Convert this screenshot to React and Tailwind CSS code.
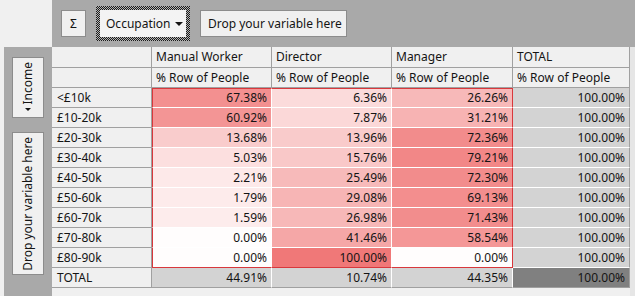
import React from 'react';

const rows = [
  ['<£10k', 67.38, 6.36, 26.26],
  ['£10-20k', 60.92, 7.87, 31.21],
  ['£20-30k', 13.68, 13.96, 72.36],
  ['£30-40k', 5.03, 15.76, 79.21],
  ['£40-50k', 2.21, 25.49, 72.3],
  ['£50-60k', 1.79, 29.08, 69.13],
  ['£60-70k', 1.59, 26.98, 71.43],
  ['£70-80k', 0, 41.46, 58.54],
  ['£80-90k', 0, 100, 0],
];

const cols = ['Manual Worker', 'Director', 'Manager', 'TOTAL'];

// heat shade: white -> red, sqrt so the small values still show
const heat = (v) => {
  const t = Math.sqrt(v / 100);
  const r = Math.round(255 - 15 * t);
  const g = Math.round(253 - 133 * t);
  return `rgb(${r},${g},${g})`;
};

const fmt = (v) => v.toFixed(2) + '%';

function HeadCell({ children }) {
  return (
    <div className="h-full bg-[#f0f0f0] border-r border-b border-[#a0a0a0] pl-[4px] flex items-center whitespace-nowrap overflow-hidden">
      {children}
    </div>
  );
}

export default function App() {
  return (
    <div className="w-[635px] h-[296px] bg-[#f0f0f0] flex flex-col overflow-hidden text-[12px] text-[#141414] font-['Noto_Sans',sans-serif] leading-none">
      <div className="flex h-[47px] shrink-0">
        <div className="w-[52px] bg-[#f0f0f0]" />
        <div className="flex-1 bg-[#a9a9a9] flex items-center pl-[9px] gap-[10px]">
          <div className="w-[25px] h-[27px] bg-[#f0f0f0] border border-[#8c8c8c] flex items-center justify-center">Σ</div>
          <div className="p-[4px] bg-[repeating-conic-gradient(#1a1a1a_0%_25%,#b4b4b4_0%_50%)] bg-[length:2px_2px]">
            <div className="w-[86px] h-[27px] bg-[#f3f3f3] flex items-center pl-[6px] pr-[3px] justify-between">
              <span>Occupation</span>
              <span className="w-0 h-0 border-l-[4px] border-r-[4px] border-t-[4px] border-l-transparent border-r-transparent border-t-[#141414]" />
            </div>
          </div>
          <div className="w-[147px] h-[27px] bg-[#f0f0f0] border border-[#8c8c8c] flex items-center pl-[7px]">Drop your variable here</div>
        </div>
      </div>
      <div className="flex flex-1">
        <div className="w-[4px]" />
        <div className="w-[48px] bg-[#a9a9a9] pt-[10px] pl-[8px] flex flex-col gap-[14px]">
          <div className="w-[32px] h-[61px] bg-[#f0f0f0] border border-[#8c8c8c] flex flex-col items-center justify-end pb-[6px]">
            <span className="[writing-mode:vertical-rl] rotate-180">Income</span>
            <span className="mt-[4px] w-0 h-0 border-l-[3px] border-r-[3px] border-t-[3px] border-l-transparent border-r-transparent border-t-[#141414]" />
          </div>
          <div className="w-[32px] h-[143px] bg-[#f0f0f0] border border-[#8c8c8c] flex items-center justify-center">
            <span className="[writing-mode:vertical-rl] rotate-180 whitespace-nowrap">Drop your variable here</span>
          </div>
        </div>
        <div className="flex flex-col">
          <div className="grid grid-cols-[100px_120px_120px_121px_117px] grid-rows-[21px_repeat(11,20px)]">
            <HeadCell />
            {cols.map((c) => (
              <HeadCell key={c}>{c}</HeadCell>
            ))}
            <HeadCell />
            {cols.map((c) => (
              <HeadCell key={c + 'm'}>% Row of People</HeadCell>
            ))}
            {rows.map((r, ri) => {
              const lastRow = ri === rows.length - 1;
              return (
                <React.Fragment key={r[0]}>
                  <div className="bg-[#f0f0f0] border-r border-b border-[#a0a0a0] pl-[5px] flex items-center">{r[0]}</div>
                  {r.slice(1).map((v, ci) => (
                    <div
                      key={ci}
                      style={{ backgroundColor: heat(v) }}
                      className={`flex items-center justify-end pr-[4px] border-r border-b border-white ${ci === 0 ? 'border-l border-l-[#d8383c]' : ''} ${ci === 2 ? 'border-r-[#d8383c]' : ''} ${ri === 0 ? 'border-t border-t-[#d8383c]' : ''} ${lastRow ? 'border-b-[#d8383c]' : ''}`}
                    >
                      {fmt(v)}
                    </div>
                  ))}
                  <div className="bg-[#d3d3d3] flex items-center justify-end pr-[4px] border-r border-r-[#a0a0a0] border-b border-b-white">100.00%</div>
                </React.Fragment>
              );
            })}
            <div className="bg-[#f0f0f0] border-r border-b border-[#a0a0a0] pl-[5px] flex items-center">TOTAL</div>
            <div className="bg-[#d3d3d3] flex items-center justify-end pr-[4px] border-r border-r-white border-b border-b-[#a0a0a0]">44.91%</div>
            <div className="bg-[#d3d3d3] flex items-center justify-end pr-[4px] border-r border-r-white border-b border-b-[#a0a0a0]">10.74%</div>
            <div className="bg-[#d3d3d3] flex items-center justify-end pr-[4px] border-r border-r-white border-b border-b-[#a0a0a0]">44.35%</div>
            <div className="bg-[#808080] flex items-center justify-end pr-[4px] border-r border-b border-[#a0a0a0]">100.00%</div>
          </div>
          <div className="flex-1 bg-[#f0f0f0]" />
        </div>
        <div className="flex-1 bg-[#e6e6e6]" />
      </div>
    </div>
  );
}
